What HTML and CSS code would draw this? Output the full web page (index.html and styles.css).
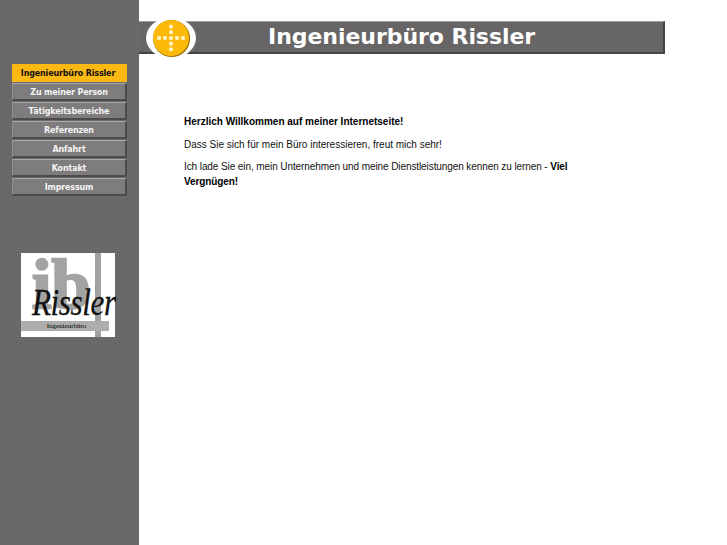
FILE: index.html
```html
<!DOCTYPE html>
<html lang="de">
<head>
<meta charset="utf-8">
<title>Ingenieurbüro Rissler</title>
<link rel="stylesheet" href="styles.css">
</head>
<body>
<aside class="sidebar">
  <nav class="nav">
    <a class="nav-item active" href="#">Ingenieurbüro Rissler</a>
    <a class="nav-item" href="#">Zu meiner Person</a>
    <a class="nav-item" href="#">Tätigkeitsbereiche</a>
    <a class="nav-item" href="#">Referenzen</a>
    <a class="nav-item" href="#">Anfahrt</a>
    <a class="nav-item" href="#">Kontakt</a>
    <a class="nav-item" href="#">Impressum</a>
  </nav>
  <div class="logo">
    <span class="logo-stripe"></span>
    <span class="logo-ib">ib</span>
    <span class="logo-bar">Ingenieurbüro</span>
    <span class="logo-name">Rissler</span>
  </div>
</aside>
<main class="main">
  <header class="banner">
    <svg class="badge" width="64" height="46" viewBox="0 0 64 46" aria-hidden="true">
      <ellipse cx="32" cy="19" rx="25" ry="20.500" fill="#fff"/>
      <circle cx="32.600" cy="19.600" r="18.500" fill="#9a7200"/>
      <circle cx="32" cy="19" r="18" fill="#fcb90a"/>
      <g fill="#fff4cc">
        <rect x="30.200" y="5.800" width="3.600" height="3.600"/>
        <rect x="30.200" y="11.400" width="3.600" height="3.600"/>
        <rect x="30.200" y="17.200" width="3.600" height="3.600"/>
        <rect x="30.200" y="22.900" width="3.600" height="3.600"/>
        <rect x="30.200" y="28.500" width="3.600" height="3.600"/>
        <rect x="18.200" y="17.200" width="3.600" height="3.600"/>
        <rect x="24.200" y="17.200" width="3.600" height="3.600"/>
        <rect x="36.200" y="17.200" width="3.600" height="3.600"/>
        <rect x="42.200" y="17.200" width="3.600" height="3.600"/>
      </g>
    </svg>
    <h1 class="banner-title">Ingenieurbüro Rissler</h1>
  </header>
  <section class="content">
    <p><strong>Herzlich Willkommen auf meiner Internetseite!</strong></p>
    <p>Dass Sie sich für mein Büro interessieren, freut mich sehr!</p>
    <p class="tight">Ich lade Sie ein, mein Unternehmen und meine Dienstleistungen kennen zu lernen - <strong>Viel Vergnügen!</strong></p>
  </section>
</main>
</body>
</html>
```
FILE: styles.css
```css
* { box-sizing: border-box; }
html, body { height: 100%; }
body {
  margin: 0;
  display: flex;
  background: #fff;
  overflow: hidden;
}
.sidebar {
  width: 139px;
  flex: none;
  background: #6a6868;
  padding: 64px 12px 0;
}
.nav {
  display: flex;
  flex-direction: column;
  gap: 1px;
  width: 115px;
}
.nav-item {
  display: block;
  height: 18px;
  text-align: center;
  font: bold 8px/18px "DejaVu Sans", sans-serif;
  letter-spacing: -0.15px;
  color: #f4f4f4;
  text-decoration: none;
  background: #7e7c7c;
  border-top: 1px solid #a9a7a7;
  border-left: 1px solid #8f8d8d;
  border-right: 2px solid #4c4a4a;
  border-bottom: 2px solid #4c4a4a;
  white-space: nowrap;
}
.nav-item.active {
  background: #fdb913;
  color: #111;
  border: 0;
  line-height: 19px;
  padding-right: 3px;
}
.logo {
  position: relative;
  width: 94px;
  height: 84px;
  margin: 57px 0 0 9px;
  background: #fff;
}
.logo-stripe {
  position: absolute;
  left: 74px;
  top: 0;
  width: 6px;
  height: 84px;
  background: #a0a0a0;
}
.logo-ib {
  position: absolute;
  left: 11px;
  top: 6px;
  font: bold 70px/52px "Liberation Serif", serif;
  color: #a3a3a3;
  -webkit-text-stroke: 2.500px #a3a3a3;
}
.logo-bar {
  position: absolute;
  left: 0;
  top: 68px;
  width: 88px;
  height: 10px;
  background: #adadad;
  font: 7px/10px "Liberation Serif", serif;
  color: #000;
  text-align: center;
  padding-left: 3px;
  white-space: nowrap;
}
.logo-name {
  position: absolute;
  left: 11px;
  top: 28px;
  font: italic 38px/42px "Liberation Serif", serif;
  letter-spacing: -0.5px;
  color: #111;
  -webkit-text-stroke: 0.300px #111;
  white-space: nowrap;
  transform: scaleX(0.82);
  transform-origin: left center;
}
.main {
  flex: 1;
  min-width: 0;
  padding-top: 21px;
}
.banner {
  position: relative;
  display: flex;
  align-items: center;
  width: 526px;
  height: 33px;
  background: #676565;
  border-top: 1px solid #a0a0a0;
  border-right: 2px solid #444;
  border-bottom: 2px solid #444;
  padding-left: 129px;
}
.badge {
  position: absolute;
  left: 0;
  top: -3px;
}
.banner-title {
  margin: 0;
  font: bold 22px/1 "DejaVu Sans", sans-serif;
  letter-spacing: -0.05px;
  color: #fff;
  white-space: nowrap;
}
.content {
  width: 400px;
  margin: 60px 0 0 45px;
  font: 10px/15px "Liberation Sans", sans-serif;
  color: #111;
}
.content p { margin: 0 0 8px; }
.content .tight { letter-spacing: -0.09px; margin-top: -1px; }
.content strong { color: #000; }
```
